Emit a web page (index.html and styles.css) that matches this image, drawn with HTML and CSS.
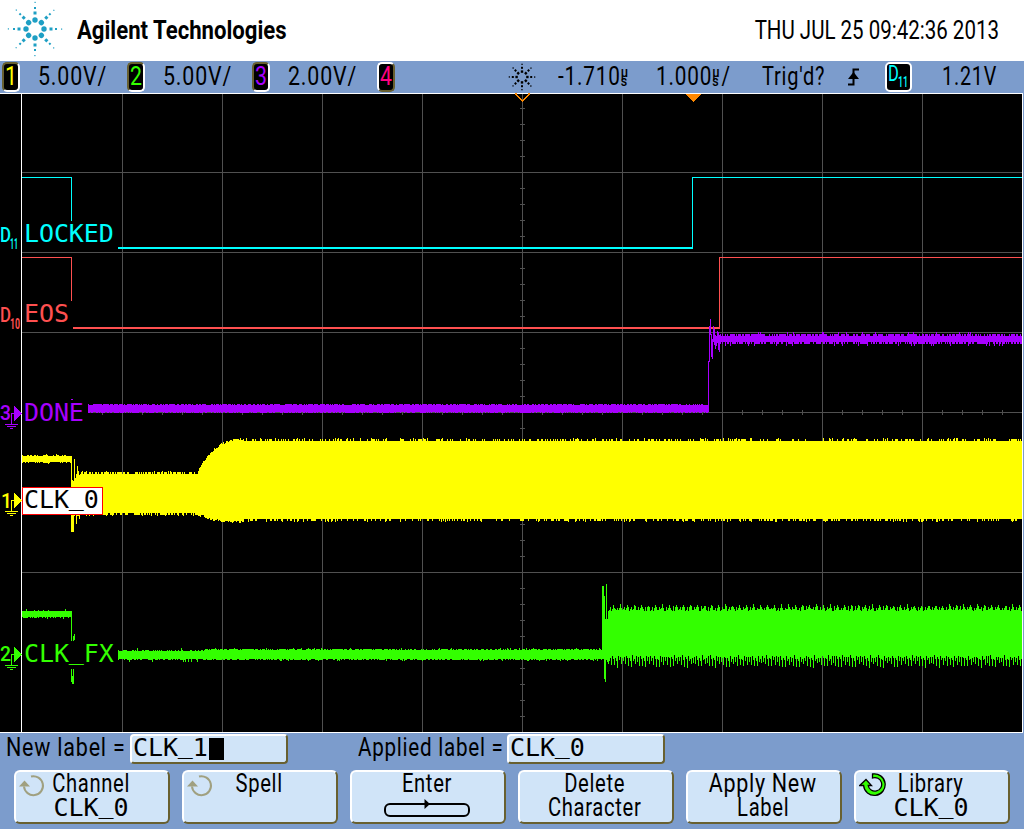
FILE: index.html
```html
<!DOCTYPE html>
<html lang="en">
<head>
    <meta charset="UTF-8">
    <meta name="viewport" content="width=device-width, initial-scale=1.0">
    <title>Agilent Technologies</title>
    <link rel="stylesheet" href="styles.css">
</head>
<body>
    <div class="header">
        <svg class="logo" width="56" height="56" viewBox="-28 -28 56 56" fill="#1e9fc4">
            <g id="ray"><circle cx="9" cy="0" r="2.7"/><rect x="14.5" y="-1.5" width="3" height="3"/><rect x="20" y="-1" width="2" height="2"/><rect x="26" y="-.5" width="1.2" height="1.2"/></g>
            <use href="#ray" transform="rotate(45)"/>
            <use href="#ray" transform="rotate(90)"/>
            <use href="#ray" transform="rotate(135)"/>
            <use href="#ray" transform="rotate(180)"/>
            <use href="#ray" transform="rotate(225)"/>
            <use href="#ray" transform="rotate(270)"/>
            <use href="#ray" transform="rotate(315)"/>
        </svg>
        <h1>Agilent Technologies</h1>
        <div class="date">THU JUL 25 09:42:36 2013</div>
    </div>

    <div class="status">
        <div class="badge ch1"><span>1</span></div>
        <div class="scale">5.00V/</div>
        <div class="badge ch2"><span>2</span></div>
        <div class="scale">5.00V/</div>
        <div class="badge ch3"><span>3</span></div>
        <div class="scale">2.00V/</div>
        <div class="badge off ch4"><span>4</span></div>
        <svg class="spark" width="28" height="28" viewBox="-14 -14 28 28">
            <g id="spark-ray"><rect x="4.2" y="-1.2" width="2.4" height="2.4"/><rect x="8.2" y="-1" width="2" height="2"/><rect x="12" y="-.6" width="1.3" height="1.3"/></g>
            <use href="#spark-ray" transform="rotate(45)"/>
            <use href="#spark-ray" transform="rotate(90)"/>
            <use href="#spark-ray" transform="rotate(135)"/>
            <use href="#spark-ray" transform="rotate(180)"/>
            <use href="#spark-ray" transform="rotate(225)"/>
            <use href="#spark-ray" transform="rotate(270)"/>
            <use href="#spark-ray" transform="rotate(315)"/>
        </svg>
        <div class="delay">-1.710<span class="unit"><i>µ</i><i>s</i></span></div>
        <div class="timebase">1.000<span class="unit"><i>µ</i><i>s</i></span>/</div>
        <div class="trig">Trig'd?</div>
        <svg class="edge" width="12" height="18" viewBox="0 0 12 18">
            <path d="M0 16.5H5.5V1.5H11" fill="none" stroke="#000" stroke-width="2"/>
            <path d="M5.5 4L11 11H0z"/>
        </svg>
        <div class="badge digital"><span class="letter">D</span><span class="index">11</span></div>
        <div class="level">1.21V</div>
    </div>

    <svg class="screen" width="1023" height="640" viewBox="0 93 1023 640" shape-rendering="crispEdges">
        <path id="grid" class="grid"/>
        <path class="blank" d="M22 400H88V425H22zM22 641H118V669H22z"/>
        <path class="frame" d="M0 93.5H1022.5V732.5H0M21.5 93V733"/>

        <path class="d11" d="M22 177.5H71.5V221"/>
        <path class="d11" d="M692.5 247V177.5H1022"/>
        <path class="d11 thick" d="M118 248H693"/>
        <path class="d10" d="M22 257.5H71.5V301"/>
        <path class="d10" d="M719.5 327V257.5H1022"/>
        <path class="d10 thick" d="M73 328H720"/>

        <path id="wave3" class="wave3"/>
        <path id="wave1" class="wave1"/>
        <path id="wave2" class="wave2"/>

        <path d="M515.5 93.5L522.5 101L529.5 93.5" fill="none" stroke="#ff8800" stroke-width="1.5"/>
        <path d="M685.5 94H701.5L693.5 102z" fill="#ff8800"/>

        <g class="c11">
            <text class="mark" x="0" y="242" textLength="11" lengthAdjust="spacingAndGlyphs">D</text>
            <text class="small" x="10" y="249" textLength="8" lengthAdjust="spacingAndGlyphs">11</text>
            <text class="name" x="24" y="242">LOCKED</text>
        </g>
        <g class="c10">
            <text class="mark" x="0" y="322" textLength="11" lengthAdjust="spacingAndGlyphs">D</text>
            <text class="small" x="10" y="329" textLength="10" lengthAdjust="spacingAndGlyphs">10</text>
            <text class="name" x="24" y="322">EOS</text>
        </g>
        <g class="c3">
            <text class="mark" x="0" y="420" textLength="11" lengthAdjust="spacingAndGlyphs">3</text>
            <use href="#ground" y="413"/>
            <text class="name" x="24" y="421">DONE</text>
        </g>
        <rect class="selected" x="22.5" y="487.5" width="80" height="27"/>
        <g class="c1">
            <text class="mark" x="1" y="508" textLength="11" lengthAdjust="spacingAndGlyphs">1</text>
            <use href="#ground" y="500"/>
        </g>
        <text class="name" x="24" y="508">CLK<tspan dy="-3">_</tspan><tspan dy="3">0</tspan></text>
        <g class="c2">
            <text class="mark" x="0" y="661" textLength="11" lengthAdjust="spacingAndGlyphs">2</text>
            <use href="#ground" y="654"/>
            <text class="name" x="24" y="662">CLK<tspan dy="-3">_</tspan><tspan dy="3">FX</tspan></text>
        </g>

        <defs>
            <g id="ground">
                <path d="M14 -7L21.5 .5L14 8z"/>
                <path d="M14 .5H11.5V11M5 11.5H18M7 13.5H16M10 15.5H13" fill="none" stroke="currentColor"/>
            </g>
        </defs>
    </svg>

    <div class="entry">
        <label class="new-label">New label =</label>
        <div class="field">CLK<span class="under">_</span>1<span class="cursor"></span></div>
        <label class="applied-label">Applied label =</label>
        <div class="field">CLK<span class="under">_</span>0</div>
    </div>

    <div class="softkeys">
        <div class="key">
            <svg class="turn" width="26" height="24" viewBox="0 0 26 24"><path d="M12 3.500A9.500 9.500 0 1 1 5 13.500" fill="none" stroke="#a0a080" stroke-width="2"/><path d="M0 13.500L5.500 7.500L11 13.500z" fill="#a0a080"/></svg>
            <span class="caption">Channel</span>
            <span class="mono">CLK<span class="under">_</span>0</span>
        </div>
        <div class="key">
            <svg class="turn" width="26" height="24" viewBox="0 0 26 24"><path d="M12 3.500A9.500 9.500 0 1 1 5 13.500" fill="none" stroke="#a0a080" stroke-width="2"/><path d="M0 13.500L5.500 7.500L11 13.500z" fill="#a0a080"/></svg>
            <span class="caption">Spell</span>
        </div>
        <div class="key">
            <span class="caption">Enter</span>
            <svg class="loop" width="86" height="18" viewBox="0 0 86 18"><rect x="1" y="5" width="84" height="12" rx="5" fill="none" stroke="#000" stroke-width="2"/><path d="M40.500 0L46 5L40.500 10z"/></svg>
        </div>
        <div class="key">
            <span class="caption">Delete</span>
            <span class="caption">Character</span>
        </div>
        <div class="key">
            <span class="caption wide">Apply New</span>
            <span class="caption">Label</span>
        </div>
        <div class="key">
            <svg class="turn" width="27" height="24" viewBox="0 0 27 24"><path d="M13.500 1A10.800 10.800 0 1 1 4.600 12.500H.800L7 6.500L12.500 12.500H9.200A6.800 6.800 0 1 0 13.500 5z" fill="#3f0" stroke="#000" stroke-width="1.300"/></svg>
            <span class="caption">Library</span>
            <span class="mono">CLK<span class="under">_</span>0</span>
        </div>
    </div>

    <script src="scope.js"></script>
</body>
</html>
```
FILE: styles.css
```css
* {
    margin: 0;
    padding: 0;
    box-sizing: border-box;
}

body {
    width: 1024px;
    height: 829px;
    overflow: hidden;
    background: #7c9ccc;
    color: #000;
    font-family: Roboto, "Liberation Sans", sans-serif;
    font-size: 25px;
    line-height: 24px;
    white-space: nowrap;
}

.header {
    height: 61px;
    background: #fff;
    display: flex;
    align-items: center;
    padding: 0 25px 3px 7px;
}

.logo {
    margin-right: 14px;
}

/* the instrument font is narrow, so text is squeezed horizontally */
.header h1 {
    padding-top: 3px;
    font-size: 25px;
    font-weight: bold;
    transform: scaleX(.885);
    transform-origin: left;
}

.date {
    margin-left: auto;
    padding-top: 3px;
    transform: scaleX(.82);
    transform-origin: right;
}

.status {
    height: 32px;
    display: flex;
    align-items: center;
    padding-left: 2px;
}

.badge {
    width: 18px;
    height: 30px;
    border: 2px solid;
    border-color: #686030 #fff #fff #686030;
    border-radius: 5px;
    background: #000;
    display: flex;
    justify-content: center;
    line-height: 26px;
}

.badge span {
    transform: scaleX(.85);
}

.badge.off {
    border-color: #fff #686030 #686030 #fff;
}

.ch1 { color: #ff0; }
.ch2 { color: #3f0; }
.ch3 { color: #a800ff; }
.ch4 { color: #ff0080; }

.scale, .delay, .timebase, .trig, .level {
    letter-spacing: 1px;
    transform: scaleX(.83);
    transform-origin: left;
}

.scale {
    width: 89px;
    margin-left: 18px;
    transform: scaleX(.855);
}

.spark {
    margin-left: 113px;
}

.delay {
    display: flex;
    align-items: center;
    width: 98px;
    margin-left: 22px;
}

.timebase {
    display: flex;
    align-items: center;
    width: 106px;
    transform: scaleX(.83);
}

.unit {
    display: flex;
    flex-direction: column;
    width: 11px;
    font-size: 15px;
    line-height: 9px;
    font-weight: 500;
    letter-spacing: 0;
}

.unit i {
    font-style: normal;
}

.trig {
    width: 86px;
    transform: scaleX(.8);
}

.badge.digital {
    width: 27px;
    margin-left: 25px;
    border-color: #fff;
    color: #0ff;
    justify-content: flex-start;
    padding-left: 1px;
}

.digital .letter {
    width: 10px;
    font-size: 22px;
    line-height: 20px;
    transform: scaleX(.75);
    transform-origin: left;
}

.digital .index {
    font-size: 15px;
    font-weight: 500;
    line-height: 36px;
    transform: scaleX(.6);
    transform-origin: left;
}

.level {
    margin-left: 30px;
    transform: scaleX(.79);
}

.screen {
    display: block;
    background: #000;
}

.grid, .frame, .d10, .d11 {
    fill: none;
    stroke-width: 1;
}

.grid { stroke: #505050; }
.blank { fill: #000; }
.frame { stroke: #fff; }
.d11 { stroke: #0ff; }
.d10 { stroke: #ff5050; }
.thick { stroke-width: 2; }

.wave1 { fill: #ff0; }
.wave2 { fill: #3f0; }
.wave3 { fill: #a800ff; }

.c1 { fill: #ff0; color: #ff0; }
.c2 { fill: #3f0; color: #3f0; }
.c3 { fill: #a800ff; color: #a800ff; }
.c10 { fill: #ff5050; }
.c11 { fill: #0ff; }

.name, .mono, .field {
    font-family: "DejaVu Sans Mono", monospace;
    font-size: 25px;
    letter-spacing: -.1px;
}

.mark {
    font-size: 20px;
    font-weight: 500;
}

.small {
    font-size: 14px;
    font-weight: bold;
}

.selected {
    fill: #fff;
    stroke: #f00;
}

.entry {
    height: 35px;
    display: flex;
    align-items: flex-start;
    padding: 1px 0 0 6px;
}

.entry label {
    padding-top: 2px;
    letter-spacing: .9px;
    transform: scaleX(.86);
    transform-origin: left;
}

.new-label {
    width: 124px;
}

.entry .applied-label {
    width: 149px;
    margin-left: 70px;
    transform: scaleX(.825);
}

.field, .key {
    background: #d0e4f8;
    border: 2px solid;
    border-color: #fff #686030 #686030 #fff;
}

.field {
    width: 158px;
    height: 30px;
    border-radius: 4px;
    padding-left: 1px;
    line-height: 24px;
    display: flex;
}

.under {
    position: relative;
    top: -3px;
}

.cursor {
    width: 15px;
    height: 22px;
    margin: 2px 0 0 1px;
    background: #000;
}

.softkeys {
    display: flex;
    gap: 12px;
    padding: 2px 0 0 14px;
}

.key {
    position: relative;
    width: 156px;
    height: 54px;
    border-radius: 6px;
    padding-right: 2px;
    display: flex;
    flex-direction: column;
    align-items: center;
}

.caption {
    letter-spacing: .8px;
    transform: scaleX(.81);
}

.caption.wide {
    transform: scaleX(.86);
}

.turn {
    position: absolute;
    left: 3px;
    top: 1px;
}

.loop {
    margin-top: 3px;
}
```
FILE: scope.js
```javascript
let seed = 7;

function rand() {
    seed = (seed * 16807) % 2147483647;
    return seed / 2147483647;
}

// one pixel column from top to bottom
function column(x, top, bottom) {
    return `M${x} ${Math.round(top)}h1V${Math.round(bottom)}h-1z`;
}

// noisy band, occasional samples stick out further
function band(x1, x2, top, bottom, noise, spike, amount = 0.6) {
    let d = '';
    for (let x = x1; x < x2; x++) {
        const up = rand() < 0.06 ? spike : rand() < amount ? noise : 0;
        const down = rand() < 0.06 ? spike : rand() < amount ? noise : 0;
        d += column(x, top - up, bottom + down);
    }
    return d;
}

function drawGrid() {
    let d = '';
    for (let x = 122; x < 1022; x += 100) d += `M${x}.5 94V732`;
    for (let y = 172; y < 732; y += 80) d += `M22 ${y}.5H1022`;
    for (let x = 42; x < 1022; x += 20) d += `M${x}.5 410V415`;
    for (let y = 108; y < 732; y += 16) d += `M520 ${y}.5H525`;
    document.getElementById('grid').setAttribute('d', d);
}

function drawDone() {
    let d = column(71, 399, 400) + column(72, 399, 400);
    d += band(88, 708, 405, 412, 1, 1);
    d += column(708, 361, 412) + column(709, 326, 362) + column(710, 319, 335);
    d += column(711, 334, 357) + column(712, 339, 359) + column(713, 326, 342);
    d += column(714, 329, 345) + column(715, 335, 349) + column(716, 336, 346);
    d += column(717, 331, 343) + column(718, 332, 350) + column(719, 335, 352);
    d += band(720, 1022, 336, 342, 2, 4);
    document.getElementById('wave3').setAttribute('d', d);
}

function drawClk0() {
    let d = band(22, 71, 456, 462, 1, 2, 0.4);
    d += column(71, 456, 532) + column(72, 480, 532) + column(73, 481, 532);
    d += column(74, 459, 516) + column(75, 478, 514) + column(76, 474, 524);
    d += column(77, 466, 516) + column(78, 471, 516) + column(79, 475, 519);
    d += band(80, 198, 474, 513, 2, 3, 0.5);
    for (let x = 198; x < 244; x++) {
        const t = (x - 198) / 46;
        d += column(x, 440 + 31 * Math.pow(1 - t, 2.6) - rand() * 2, 514 + 6 * Math.min(1, t * 2) + rand() * 3);
    }
    d += band(244, 1022, 441, 519, 2, 3, 0.3);
    document.getElementById('wave1').setAttribute('d', d);
}

function drawClkFx() {
    let d = band(22, 71, 611, 617, 1, 2, 0.3);
    d += column(71, 611, 641) + column(73, 636, 641) + column(74, 634, 640);
    d += column(71, 669, 682) + column(72, 676, 684) + column(73, 669, 684);
    d += band(118, 204, 651, 659, 1, 3, 0.4) + band(204, 602, 650, 659, 1, 2);
    d += column(602, 586, 659) + column(603, 586, 659) + column(604, 596, 679) + column(605, 619, 682);
    d += column(606, 584, 660) + column(607, 619, 662) + column(608, 611, 664);
    const dips = [6, 1, 9, 0, 3, 10, 2, 4, 11, 0, 5, 2, 8, 1];
    const peaks = [0, 3, 0, 2, 5, 3, 0];
    for (let x = 609; x < 1022; x++) {
        d += column(x, 609 - peaks[x % 7] + rand() * 2, 656 + dips[(x - 609) % 14] + rand() * 2 - 1);
    }
    document.getElementById('wave2').setAttribute('d', d);
}

drawGrid();
drawDone();
drawClk0();
drawClkFx();
```
